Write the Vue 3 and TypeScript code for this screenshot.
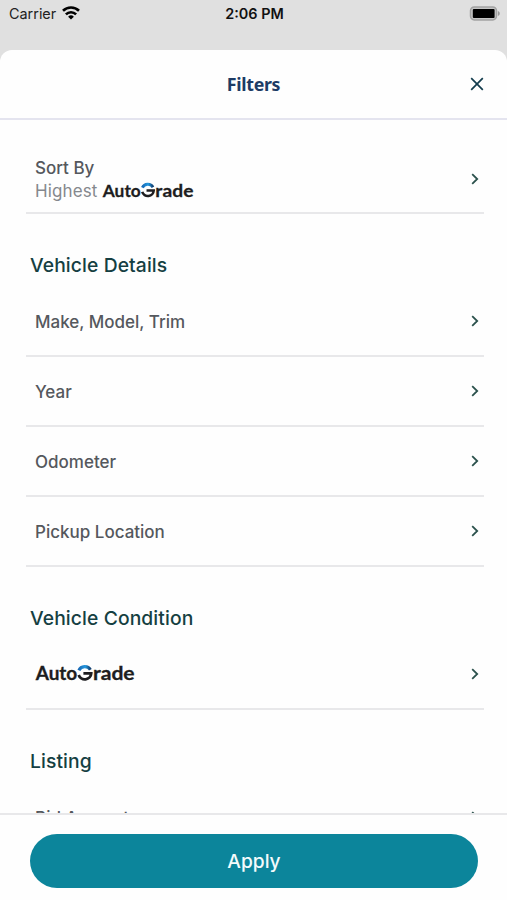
<script setup lang="ts">
import { defineComponent, h } from 'vue'

interface FilterRow {
  label: string
  logo?: boolean
}
interface Section {
  title: string
  rows: FilterRow[]
}

const sections: Section[] = [
  {
    title: 'Vehicle Details',
    rows: [
      { label: 'Make, Model, Trim' },
      { label: 'Year' },
      { label: 'Odometer' },
      { label: 'Pickup Location' },
    ],
  },
  { title: 'Vehicle Condition', rows: [{ label: 'AutoGrade', logo: true }] },
  { title: 'Listing', rows: [{ label: 'Bid Amount' }] },
]

const Chevron = defineComponent({
  render: () =>
    h('svg', { width: 8, height: 12, viewBox: '0 0 8 12', fill: 'none', 'aria-hidden': 'true' }, [
      h('path', { d: 'M1.2 1.2 6.2 6 1.2 10.8', stroke: '#2b514c', 'stroke-width': 1.8 }),
    ]),
})

const font = { 'font-family': 'Lato, sans-serif', 'font-weight': 700, 'font-size': 18.5, fill: '#1d1d20', stroke: '#1d1d20', 'stroke-width': 0.3 }

const AutoGradeLogo = defineComponent({
  props: { width: { type: Number, required: true } },
  setup: (props) => () =>
    h('svg', { width: props.width, height: props.width * 0.24, viewBox: '0 -2 100 24', overflow: 'visible', role: 'img', 'aria-label': 'AutoGrade' }, [
      h('defs', [
        h('linearGradient', { id: 'arc', x1: 0, y1: 0, x2: 1, y2: 0 }, [
          h('stop', { offset: 0, 'stop-color': '#1769b5' }),
          h('stop', { offset: 0.55, 'stop-color': '#2499e0' }),
          h('stop', { offset: 1, 'stop-color': '#123f70' }),
        ]),
      ]),
      h('text', { ...font, x: 0.7, y: 16.3, textLength: 41.6, lengthAdjust: 'spacingAndGlyphs' }, 'Auto'),
      h('path', { d: 'M43.9 6.4A6.5 6.5 0 0 1 55.4 5.8', fill: 'none', stroke: 'url(#arc)', 'stroke-width': 3.2 }),
      h('path', { d: 'M48.4 9.4H56.2A6.4 6.2 0 0 1 43.7 11', fill: 'none', stroke: '#1d1d20', 'stroke-width': 2.8 }),
      h('text', { ...font, x: 58, y: 16.3, textLength: 41.6, lengthAdjust: 'spacingAndGlyphs' }, 'rade'),
    ]),
})
</script>

<template>
  <div class="screen">
    <header class="status">
      <div class="carrier">
        <span>Carrier</span>
        <svg width="18" height="14" viewBox="0 0 18 14" fill="none" stroke="#000" stroke-width="2.6">
          <path d="M1 4.8a11.4 11.4 0 0 1 16 0" />
          <path d="M3.9 8.3a7.2 7.2 0 0 1 10.2 0" />
          <path d="M9 13.6 6.1 10.7a4.1 4.1 0 0 1 5.8 0Z" fill="#000" stroke="none" />
        </svg>
      </div>
      <span class="time">2:06 PM</span>
      <svg class="battery" width="31" height="15" viewBox="0 0 31 15">
        <rect x="1.5" y="0.9" width="26" height="13" rx="3.8" fill="#c6c6c6" stroke="#a2a2a2" stroke-width="1.5" />
        <rect x="3.8" y="2.9" width="21.8" height="9.2" rx="1" fill="#000" />
        <path d="M28.9 5v5c2.5-.8 2.5-4.2 0-5Z" fill="#999" />
      </svg>
    </header>

    <main class="sheet">
      <div class="titlebar">
        <h1>Filters</h1>
        <button class="close" aria-label="Close">
          <svg width="14" height="14" viewBox="0 0 14 14" fill="none" stroke="#123c4d" stroke-width="1.7">
            <path d="m1.2 1.2 11.6 11.6M12.8 1.2 1.2 12.8" />
          </svg>
        </button>
      </div>

      <div class="content">
        <div class="row sort">
          <div>
            <div class="label">Sort By</div>
            <div class="value"><span>Highest</span><AutoGradeLogo :width="92" /></div>
          </div>
          <Chevron />
        </div>
        <section v-for="section in sections" :key="section.title">
          <h2>{{ section.title }}</h2>
          <div v-for="row in section.rows" :key="row.label" class="row">
            <AutoGradeLogo v-if="row.logo" :width="100" />
            <span v-else class="label">{{ row.label }}</span>
            <Chevron />
          </div>
        </section>
      </div>

      <footer><button class="apply">Apply</button></footer>
    </main>
  </div>
</template>

<style>
body {
  margin: 0;
  background: #e0e0e0;
}
</style>

<style scoped>
.screen {
  display: flex;
  flex-direction: column;
  width: 507px;
  height: 900px;
  overflow: hidden;
  background: #e0e0e0;
  font-family: Inter, sans-serif;
}
.status {
  display: grid;
  grid-template-columns: 1fr auto 1fr;
  align-items: center;
  flex: none;
  height: 27px;
  padding: 0 7px 0 9px;
  margin-bottom: 23px;
  font-size: 14.4px;
  color: #222;
}
.carrier {
  display: flex;
  align-items: center;
  gap: 6px;
}
.carrier svg {
  margin-top: -1px;
}
.time {
  font-weight: 600;
  color: #111;
}
.battery {
  justify-self: end;
}
.sheet {
  display: flex;
  flex: 1;
  flex-direction: column;
  min-height: 0;
  border-radius: 12px 12px 0 0;
  background: #fefefe;
}
.titlebar {
  display: grid;
  grid-template-columns: 1fr auto 1fr;
  align-items: center;
  flex: none;
  box-sizing: border-box;
  height: 70px;
  padding: 0 23.5px;
  border-bottom: 2px solid #e4e4ef;
}
h1 {
  grid-column: 2;
  margin: 0;
  font: 700 17.8px/24px "Noto Sans", sans-serif;
  letter-spacing: -0.3px;
  color: #1d3b65;
}
button {
  border: 0;
  padding: 0;
}
.close {
  display: flex;
  justify-self: end;
  background: none;
}
.content {
  flex: 1;
  min-height: 0;
  overflow: hidden;
  padding: 0 23px 0 26px;
}
.row {
  display: flex;
  align-items: center;
  justify-content: space-between;
  box-sizing: border-box;
  height: 70px;
  padding: 0 5.5px 0 9px;
  border-bottom: 2px solid #e8e8ea;
}
.sort {
  height: 94px;
  padding-top: 26px;
}
.label {
  font-size: 17px;
  font-weight: 500;
  line-height: 24px;
  color: #55585d;
}
.row:not(.sort) .label {
  padding-top: 2px;
}
.value {
  display: flex;
  align-items: center;
  gap: 5px;
  height: 23px;
  font-size: 17px;
  line-height: 23px;
  letter-spacing: 0.1px;
  color: #85888d;
}
h2 {
  margin: 0;
  padding: 38px 0 9px 4px;
  font-size: 19.3px;
  font-weight: 500;
  line-height: 26px;
  letter-spacing: 0.1px;
  color: #153f42;
}
footer {
  flex: none;
  box-sizing: border-box;
  height: 87px;
  padding: 19px 29px 0 30px;
  border-top: 2px solid #e8e8ea;
}
.apply {
  width: 100%;
  height: 54px;
  border-radius: 27px;
  background: #0c859b;
  color: #f4fbfc;
  font: 500 19.2px Inter, sans-serif;
}
</style>
